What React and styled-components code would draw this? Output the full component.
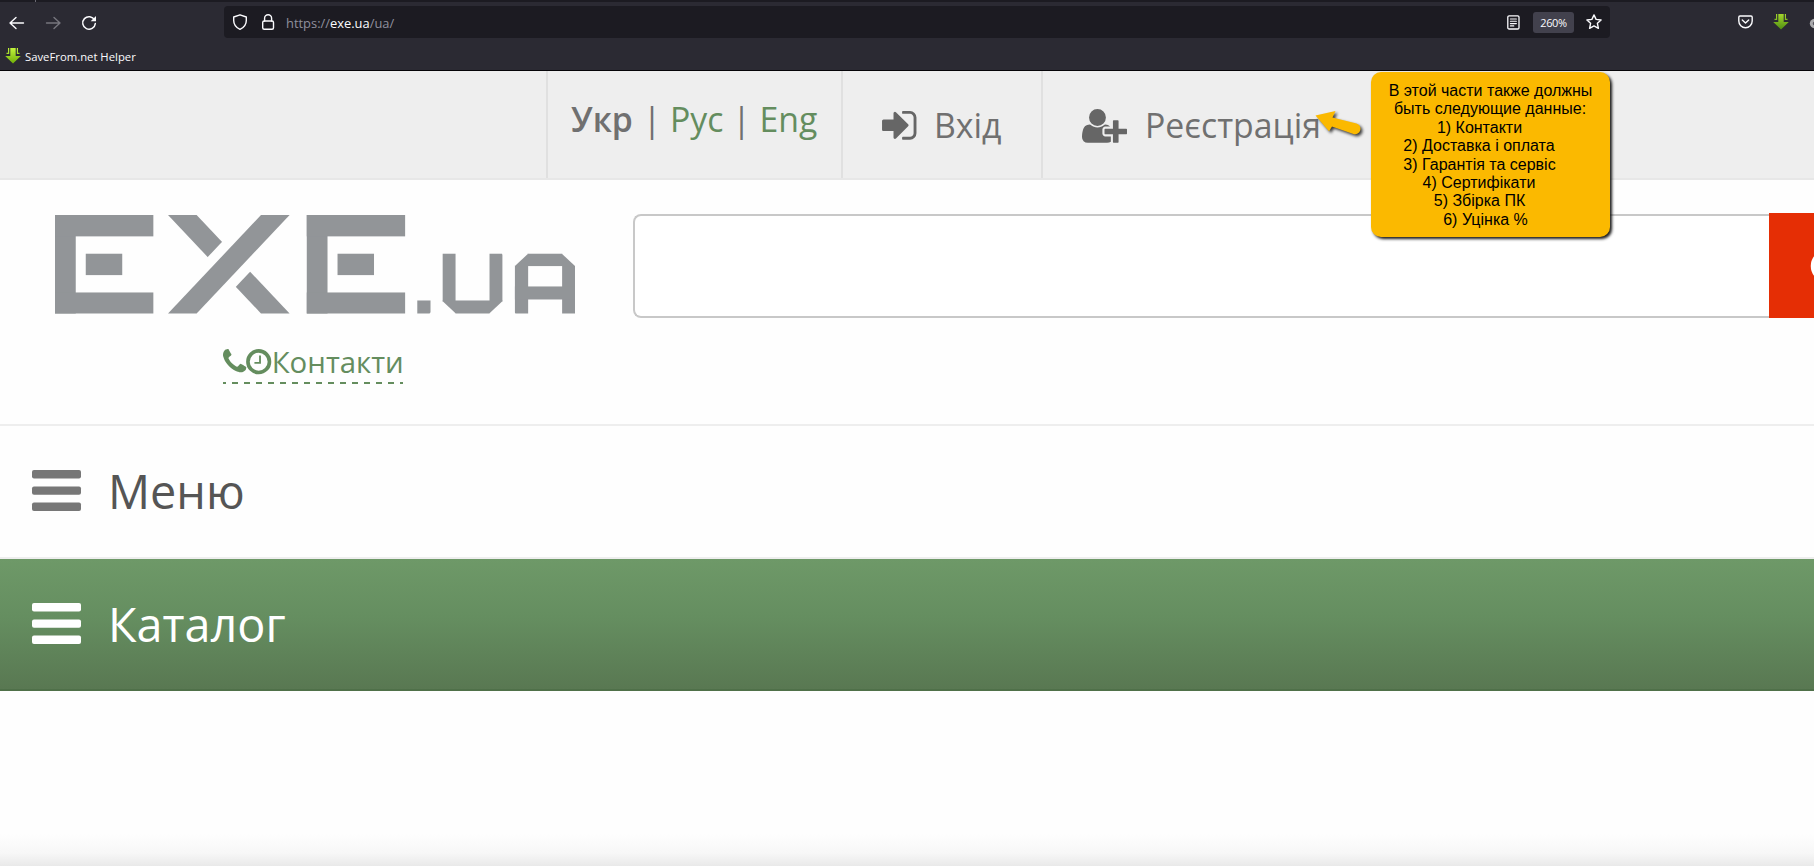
import React from "react";
import styled, { createGlobalStyle } from "styled-components";

const GlobalStyle = createGlobalStyle`
  * { box-sizing: border-box; }
  html, body { margin: 0; padding: 0; background: #fefefe; overflow: hidden; }
  svg { display: block; flex: none; overflow: visible; }
`;

const Screen = styled.div`
  position: relative;
  display: flex;
  flex-direction: column;
  width: 1814px;
  height: 866px;
  overflow: hidden;
  background: #fefefe;
  font-family: "Open Sans", "Noto Sans", sans-serif;
`;

/* ---------- Browser chrome ---------- */

const Chrome = styled.header`
  flex: none;
  height: 71px;
  background: #2b2a33;
  border-bottom: 1px solid #050408;
  color: #fbfbfe;
`;

const TabStrip = styled.div`
  height: 2px;
  padding-left: 35px;
  background: #1c1b22;
`;

const TabEdge = styled.div`
  width: 1px;
  height: 2px;
  background: #6a6972;
`;

const Toolbar = styled.div`
  display: flex;
  align-items: center;
  height: 40px;
`;

const NavButtons = styled.div`
  display: flex;
  flex: none;
  gap: 20px;
  width: 224px;
  padding: 1px 0 0 9px;
`;

const AddressBar = styled.div`
  display: flex;
  flex: none;
  align-items: center;
  width: 1386px;
  height: 32px;
  padding: 0 8px;
  border-radius: 4px;
  background: #1c1b22;
`;

const Security = styled.div`
  display: flex;
  flex: none;
  gap: 13px;
  width: 54px;
`;

const Url = styled.div`
  flex: 1;
  padding-top: 2px;
  font-size: 12.9px;
  line-height: 20px;
  color: #8f8f9d;
  b { font-weight: 400; color: #fbfbfe; }
`;

const ZoomBadge = styled.div`
  flex: none;
  width: 41px;
  height: 21px;
  margin: 1px 12px 0 13px;
  border-radius: 3px;
  background: #42414d;
  font-size: 11px;
  letter-spacing: -0.4px;
  line-height: 22px;
  text-align: center;
`;

const Extensions = styled.div`
  display: flex;
  flex: none;
  align-items: center;
  gap: 20px;
  padding-left: 128px;
`;

const Bookmarks = styled.div`
  display: flex;
  align-items: center;
  gap: 4px;
  height: 27px;
  padding: 1px 0 0 5px;
  font-size: 11.3px;
  line-height: 16px;
`;

const BookmarkLabel = styled.span`
  padding-top: 2px;
`;

/* ---------- Site ---------- */

const TopBar = styled.nav`
  display: flex;
  flex: none;
  height: 109px;
  padding-left: 546px;
  background: #eee;
  border-bottom: 2px solid #e7e7e7;
`;

const TopCell = styled.div`
  display: flex;
  flex: none;
  align-items: center;
  width: ${(p) => p.$width}px;
  padding: ${(p) => p.$padding};
  border-left: 2px solid #e0e0e0;
  color: #707070;
  font-size: 33.8px;
  line-height: 46px;
  white-space: pre;
`;

const CurrentLang = styled.span`
  font-weight: 600;
  margin-right: 1px;
`;

const LangLink = styled.span`
  color: #648d5e;
`;

const CellLabel = styled.span`
  margin: -2px 0 0 ${(p) => p.$gap}px;
`;

const Header = styled.section`
  display: flex;
  flex: none;
  height: 246px;
  padding-left: 55px;
  border-bottom: 2px solid #eee;
`;

const Brand = styled.div`
  flex: none;
  width: 578px;
  padding-top: 35px;
`;

const Contacts = styled.div`
  display: flex;
  width: 180px;
  height: 39px;
  margin: 31px 0 0 168px;
  background: repeating-linear-gradient(
      90deg,
      #648d5e 0 3px,
      transparent 3px 9px,
      #648d5e 9px 12px
    )
    0 100% / 100% 2px no-repeat;
  color: #648d5e;
  font-size: 29.4px;
  line-height: 34px;
  white-space: nowrap;
`;

const SearchForm = styled.div`
  display: flex;
  flex: none;
  margin-top: 33px;
  height: 105px;
`;

const SearchInput = styled.div`
  flex: none;
  width: 1136px;
  height: 104px;
  margin-top: 1px;
  border: 2px solid #c8c8c8;
  border-right: 0;
  border-radius: 8px 0 0 8px;
  background: #fff;
`;

const SearchButton = styled.div`
  display: flex;
  flex: none;
  align-items: center;
  width: 130px;
  padding-left: 42px;
  background: #e52e05;
`;

const MenuRow = styled.div`
  display: flex;
  flex: none;
  align-items: center;
  gap: 27px;
  height: ${(p) => (p.$green ? 132 : 133)}px;
  padding: 0 0 ${(p) => (p.$green ? 1 : 2)}px 32px;
  border-bottom: 2px solid ${(p) => (p.$green ? "#4f7049" : "#eee")};
  background: ${(p) => (p.$green ? "linear-gradient(#6e9968, #658e60 45%, #597852)" : "#fefefe")};
  color: ${(p) => (p.$green ? "#fff" : "#555")};
  font-size: 46.8px;
  line-height: 64px;
`;

const BottomShade = styled.div`
  flex: none;
  height: 32px;
  margin-top: auto;
  background: linear-gradient(#fefefe, #f7f7f7 60%, #e9e9e9);
`;

/* ---------- Annotation ---------- */

const Note = styled.div`
  position: absolute;
  left: 1371px;
  top: 72px;
  width: 239px;
  height: 165px;
  padding-top: 10px;
  border-radius: 10px;
  background: #fbb900;
  box-shadow: 2px 2px 3px rgba(0, 0, 0, 0.9);
  color: #000;
  font-family: "Liberation Sans", Arial, sans-serif;
  font-size: 16px;
  line-height: 18.4px;
`;

const NoteLine = styled.div`
  padding-right: ${(p) => p.$shift}px;
  text-align: center;
  white-space: nowrap;
`;

const PointerArrow = styled.svg`
  position: absolute;
  left: 1305px;
  top: 100px;
  filter: drop-shadow(2px 2px 1.5px rgba(0, 0, 0, 0.75));
`;

/* ---------- Icons ---------- */

const line = { fill: "none", stroke: "currentColor", strokeLinecap: "round", strokeLinejoin: "round" };

const BackIcon = ({ color, flip }) => (
  <svg width="16" height="16" viewBox="0 0 16 16" {...line} stroke={color} strokeWidth="1.4">
    <path d={flip ? "M1.5 8H15M9 2.500L15 8l-6 5.500" : "M14.500 8H1M7 2.500L1 8l6 5.500"} />
  </svg>
);

const ReloadIcon = () => (
  <svg width="16" height="16" viewBox="0 0 16 16" {...line} strokeWidth="1.5">
    <path d="M13.600 5A6.300 6.300 0 1 0 14.300 8.600" />
    <path d="M15 1v5.300H9.700z" fill="currentColor" stroke="none" />
  </svg>
);

const ShieldIcon = () => (
  <svg width="16" height="16" viewBox="0 0 16 16" {...line} strokeWidth="1.400">
    <path d="M8 .8L14.300 3v3.500C14.300 10.500 12 13.500 8 15.400 4 13.500 1.700 10.500 1.700 6.500V3z" />
  </svg>
);

const LockIcon = () => (
  <svg width="14" height="16" viewBox="0 0 14 16" {...line} strokeWidth="1.400">
    <rect x="1.700" y="7" width="10.800" height="8.300" rx="1.500" />
    <path d="M3.600 7V4.200a3.500 3.500 0 0 1 7 0V7" />
  </svg>
);

const ReaderIcon = () => (
  <svg width="13" height="15" viewBox="0 0 13 15" {...line} strokeWidth="1.300">
    <rect x=".8" y=".8" width="11.200" height="13.200" rx="1.300" />
    <path d="M3.400 4h6M3.400 6.300h6M3.400 8.600h6M3.400 10.900h3.400" strokeWidth="1.100" />
  </svg>
);

const StarIcon = () => (
  <svg width="16" height="16" viewBox="0 0 16 16" {...line} strokeWidth="1.400">
    <path d="M8 .9l2.100 4.500 5 .6-3.700 3.300 1 5L8 11.900l-4.400 2.400 1-5L.9 6l5-.6z" />
  </svg>
);

const PocketIcon = () => (
  <svg width="15" height="14" viewBox="0 0 15 14" {...line} strokeWidth="1.400">
    <path d="M2 1h11a1.200 1.200 0 0 1 1.200 1.200V6A6.700 6.700 0 0 1 .8 6V2.200A1.200 1.200 0 0 1 2 1z" />
    <path d="M4.300 5l3.200 3 3.200-3" />
  </svg>
);

const DownloadIcon = ({ from, to }) => (
  <svg width="16" height="16" viewBox="0 0 16 16">
    <defs>
      <linearGradient id={"g" + from.slice(1)} x2="0" y2="1">
        <stop offset="0" stopColor={from} />
        <stop offset="1" stopColor={to} />
      </linearGradient>
    </defs>
    <path
      d="M5.300 0H10.700V8H15.800L8 15.500.2 8H5.300zM3 0h1.200v6H1.500V4.800H3zM13 0h-1.200v6h2.700V4.800H13z"
      fill={"url(#g" + from.slice(1) + ")"}
    />
  </svg>
);

const CloudIcon = () => (
  <svg width="16" height="16" viewBox="0 0 16 16" fill="#a9a9ac">
    <circle cx="5.500" cy="9.500" r="4.700" />
    <circle cx="9" cy="6.500" r="3.500" />
    <circle cx="5.500" cy="9.500" r="1.700" fill="#55545c" />
  </svg>
);

const SignInIcon = () => (
  <svg width="34.500" height="28.700" viewBox="128 256 1536 1280" fill="#666">
    <path d="M1312 896q0 26-19 45l-544 544q-19 19-45 19t-45-19-19-45v-288H192q-26 0-45-19t-19-45V704q0-26 19-45t45-19h448V352q0-26 19-45t45-19 45 19l544 544q19 19 19 45zm352-352v704q0 119-84.500 203.500T1376 1536h-320q-13 0-22.500-9.500T1024 1504q0-4-1-20t-.5-26.500 3-23.500 10-19.500 20.500-6.500h320q66 0 113-47t47-113V544q0-66-47-113t-113-47h-312l-11.500-1-11.500-3-8-5.500-7-9-2-13.500q0-4-1-20t-.5-26.500 3-23.500 10-19.500 20.500-6.500h320q119 0 203.500 84.500T1664 544z" />
  </svg>
);

const UserPlusIcon = () => (
  <svg width="45" height="33.750" viewBox="0 128 2048 1536" fill="#666">
    <path d="M704 896q-159 0-271.500-112.500T320 512t112.500-271.500T704 128t271.500 112.500T1088 512 975.500 783.500 704 896zm960 128h352q13 0 22.500 9.500t9.500 22.500v192q0 13-9.500 22.500t-22.500 9.500h-352v352q0 13-9.500 22.500t-22.500 9.500h-192q-13 0-22.500-9.500t-9.500-22.500v-352h-352q-13 0-22.500-9.500t-9.500-22.500v-192q0-13 9.500-22.500t22.500-9.500h352V672q0-13 9.500-22.500t22.500-9.500h192q13 0 22.500 9.500t9.500 22.500v352zm-736 224q0 52 38 90t90 38h256v238q-68 50-171 50H267q-121 0-194-69T0 1405q0-53 3.500-103.500t14-109T44 1084t43-97.500 62-81 85.500-53.500T346 832q19 0 39 17 79 61 154.500 91.500T704 971t164.500-30.500T1023 849q20-17 39-17 132 0 217 96h-223q-52 0-90 38t-38 90v192z" />
  </svg>
);

const ContactIcon = styled.svg`
  margin: ${(p) => p.$margin};
`;

const PhoneIcon = () => (
  <ContactIcon $margin="4.5px 0 0" width="23.300" height="23.300" viewBox="0 0 1408 1408" fill="currentColor">
    <path d="M1408 1112q0 27-10 70.500t-21 68.500q-21 50-122 106-94 51-186 51-27 0-52.500-3.500t-57.500-12.500-47.500-14.500-55.500-20.500-49-18q-98-35-175-83-128-79-264.500-215.500T151 777q-48-77-83-175-3-9-18-49T29.500 497.500 15 450 2.500 392.500 0 340q0-92 51-186 56-101 106-122 25-11 68.500-21T295 1q14 0 21 3 18 6 53 76 11 19 30 54t35 63.500 31 53.500q3 4 17.500 25t21.500 35.500 7 28.500q0 20-28.500 50t-62 55-62 53-28.500 46q0 9 5 22.500t8.500 20.500 14 24 11.500 19q76 137 174 235t235 174q2 1 19 11.500t24 14 20.500 8.500 22.500 5q18 0 46-28.500t53-62 55-62 50-28.500q14 0 28.500 7t35.500 21.500 25 17.500q25 15 53.500 31t63.500 35 54 30q70 35 76 53 3 7 3 21z" />
  </ContactIcon>
);

const ClockIcon = () => (
  <ContactIcon $margin="4.5px 0 0" width="25.400" height="25.400" viewBox="0 0 25 25" fill="none" stroke="currentColor">
    <circle cx="12.500" cy="12.500" r="10.600" strokeWidth="3.600" />
    <path d="M13.800 6.500v7.200H8.300" strokeWidth="1.800" />
  </ContactIcon>
);

const BarsIcon = ({ color }) => (
  <svg width="49" height="41" viewBox="0 0 49 41" fill={color}>
    <rect width="49" height="8.400" rx="2" />
    <rect y="16.400" width="49" height="8.400" rx="2" />
    <rect y="32.600" width="49" height="8.400" rx="2" />
  </svg>
);

const SearchIcon = () => (
  <svg width="40" height="40" viewBox="0 0 40 40" fill="none" stroke="#fff" strokeWidth="5.500">
    <circle cx="16" cy="20" r="13.500" />
    <path d="M26 30l11 10" strokeLinecap="round" />
  </svg>
);

const BlockE = ({ x }) => (
  <g transform={`translate(${x} 0)`}>
    <rect width="58" height="295" />
    <rect width="275" height="64" />
    <rect y="232" width="275" height="63" />
    <rect x="86" y="116" width="102" height="64" />
  </g>
);

const Logo = () => (
  <svg
    width="520"
    height="98.500"
    viewBox="0 0 1454 295"
    preserveAspectRatio="none"
    fill="#929598"
    role="img"
    aria-label="EXE.UA"
  >
    <BlockE x={0} />
    <rect width="80" height="295" transform="translate(316 0) skewX(41.390)" />
    <rect x="-38" width="157" height="295" fill="#fefefe" transform="translate(576 0) skewX(-41.390)" />
    <rect width="80" height="295" transform="translate(576 0) skewX(-41.390)" />
    <BlockE x={704} />
    <rect x="1013" y="256" width="37" height="39" />
    <rect x="1084" y="116" width="36" height="179" />
    <rect x="1215" y="116" width="36" height="179" />
    <rect x="1084" y="256" width="167" height="39" />
    <rect x="1286" y="116" width="37" height="179" />
    <rect x="1418" y="116" width="36" height="179" />
    <rect x="1286" y="116" width="168" height="37" />
    <rect x="1286" y="214" width="168" height="39" />
    <g fill="#fefefe">
      <rect x="-26" y="-26" width="52" height="52" transform="translate(1084 295) rotate(45)" />
      <rect x="-26" y="-26" width="52" height="52" transform="translate(1251 295) rotate(45)" />
      <rect x="-26" y="-26" width="52" height="52" transform="translate(1286 116) rotate(45)" />
      <rect x="-26" y="-26" width="52" height="52" transform="translate(1454 116) rotate(45)" />
    </g>
  </svg>
);

const noteLines = [
  ["В этой части также должны", 0],
  ["быть следующие данные:", 1],
  ["1) Контакти", 22],
  ["2) Доставка і оплата", 23],
  ["3) Гарантія та сервіс", 22],
  ["4) Сертифікати", 23],
  ["5) Збірка ПК", 22],
  ["6) Уцінка %", 10],
];

export default function App() {
  return (
    <Screen>
      <GlobalStyle />
      <Chrome>
        <TabStrip>
          <TabEdge />
        </TabStrip>
        <Toolbar>
          <NavButtons>
            <BackIcon color="#fbfbfe" />
            <BackIcon color="#77767e" flip />
            <ReloadIcon />
          </NavButtons>
          <AddressBar>
            <Security>
              <ShieldIcon />
              <LockIcon />
            </Security>
            <Url>
              https://<b>exe.ua</b>/ua/
            </Url>
            <ReaderIcon />
            <ZoomBadge>260%</ZoomBadge>
            <StarIcon />
          </AddressBar>
          <Extensions>
            <PocketIcon />
            <DownloadIcon from="#a4d62c" to="#4f8f12" />
            <CloudIcon />
          </Extensions>
        </Toolbar>
        <Bookmarks>
          <DownloadIcon from="#c3f53c" to="#6fae08" />
          <BookmarkLabel>SaveFrom.net Helper</BookmarkLabel>
        </Bookmarks>
      </Chrome>

      <TopBar>
        <TopCell $width={295} $padding="0 0 11px 23px">
          <CurrentLang>Укр</CurrentLang> | <LangLink>Рус</LangLink> | <LangLink>Eng</LangLink>
        </TopCell>
        <TopCell $width={200} $padding="2px 0 0 39px">
          <SignInIcon />
          <CellLabel $gap={17.5}>Вхід</CellLabel>
        </TopCell>
        <TopCell $width={400} $padding="2px 0 0 39px">
          <UserPlusIcon />
          <CellLabel $gap={18}>Реєстрація</CellLabel>
        </TopCell>
      </TopBar>

      <Header>
        <Brand>
          <Logo />
          <Contacts>
            <PhoneIcon />
            <ClockIcon />
            Контакти
          </Contacts>
        </Brand>
        <SearchForm>
          <SearchInput />
          <SearchButton>
            <SearchIcon />
          </SearchButton>
        </SearchForm>
      </Header>

      <MenuRow>
        <BarsIcon color="#777" />
        Меню
      </MenuRow>
      <MenuRow $green>
        <BarsIcon color="#fff" />
        Каталог
      </MenuRow>
      <BottomShade />

      <Note>
        {noteLines.map(([text, shift]) => (
          <NoteLine key={text} $shift={shift}>
            {text}
          </NoteLine>
        ))}
      </Note>
      <PointerArrow width="65" height="45" viewBox="0 0 65 45" fill="#fbb900">
        <path d="M10.500 15.500L30.500 11l-3 6.500L51.500 23.500a5.300 5.300 0 0 1-3 10.500L27 26.500l-3 4.800z" />
      </PointerArrow>
    </Screen>
  );
}
